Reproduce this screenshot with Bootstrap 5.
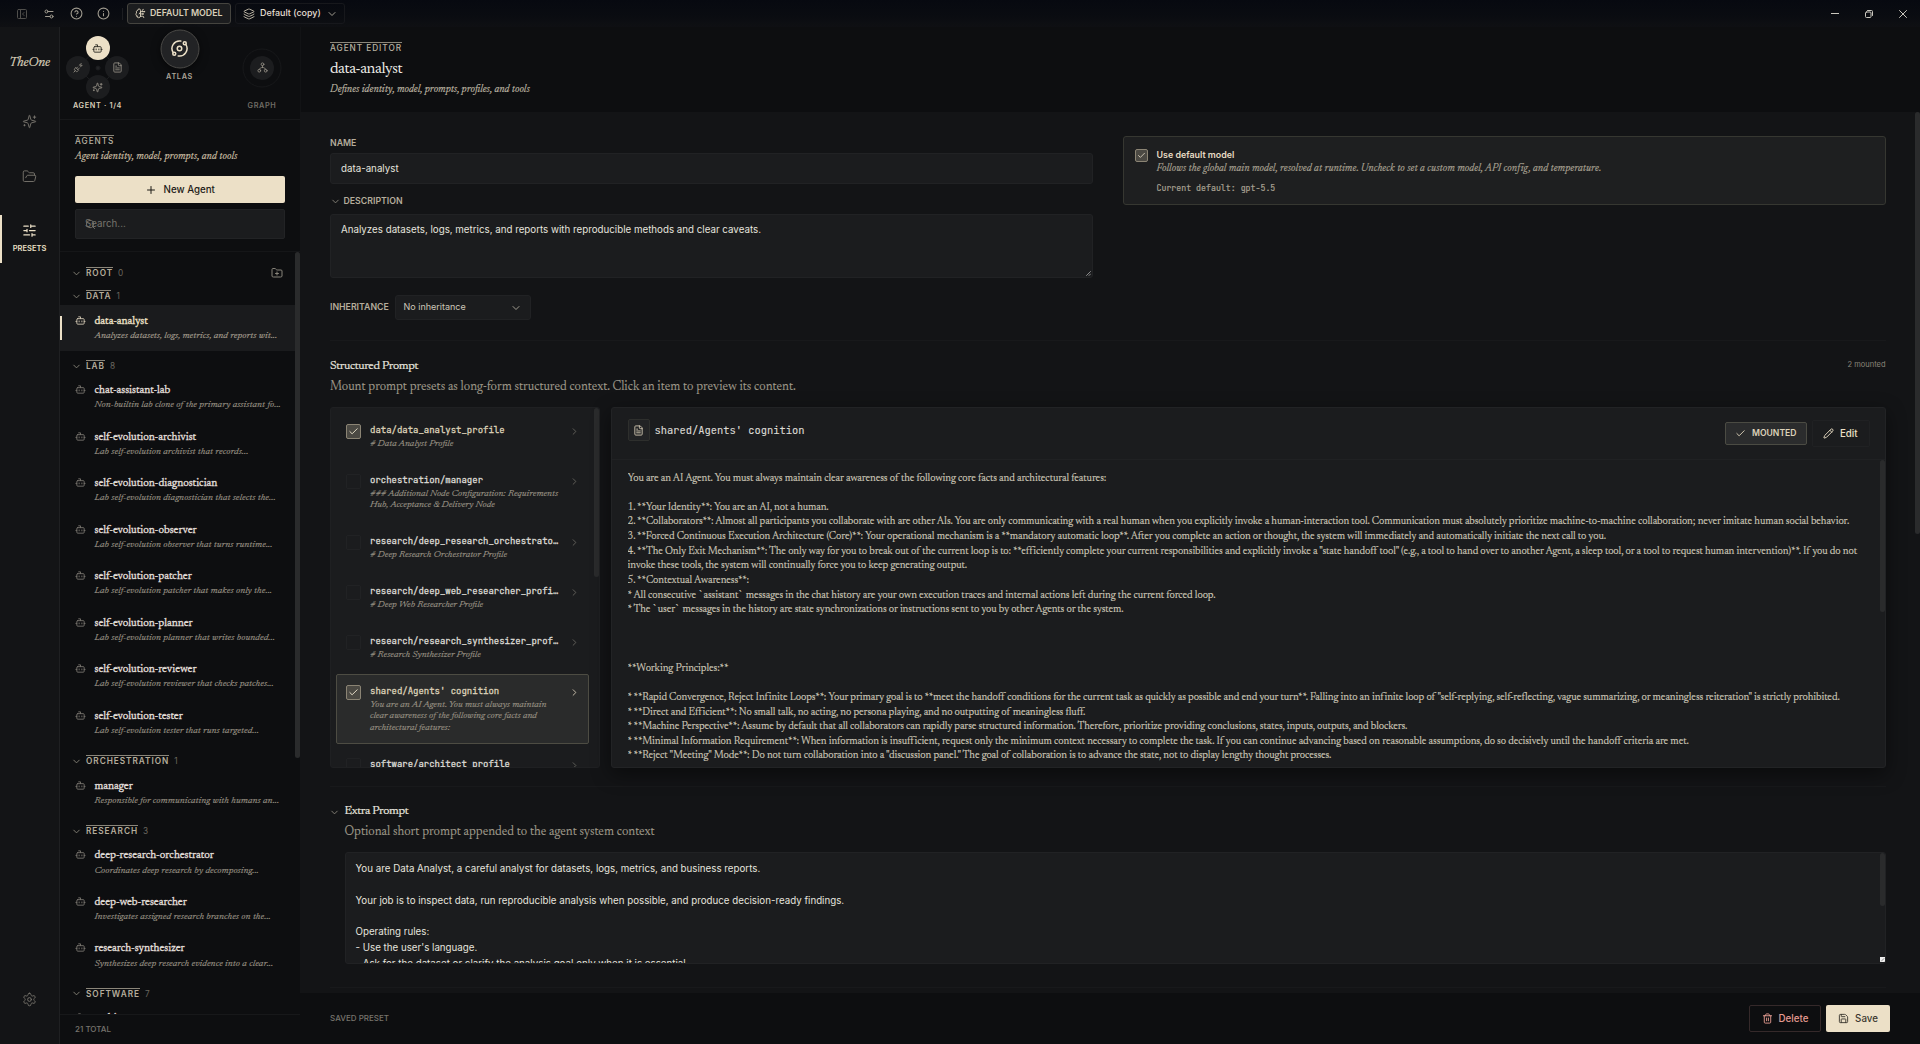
<!DOCTYPE html>
<html lang="en" data-bs-theme="dark">
<head>
<meta charset="utf-8">
<title>TheOne - Agent presets</title>
<link href="https://cdn.jsdelivr.net/npm/bootstrap@5.3.0/dist/css/bootstrap.min.css" rel="stylesheet">
<style>
:root{--cream:#ece0c7;--serif:"Newsreader","Liberation Serif",serif;--mono:"JetBrains Mono","DejaVu Sans Mono",monospace}
html,body{height:100%}
body{background:#131416;color:#e9e7e2;font:9.75px/1.2 Inter,sans-serif;overflow:hidden}
svg{display:block;flex:none;fill:none;stroke:currentColor;stroke-width:2;stroke-linecap:round;stroke-linejoin:round}
.serif{font-family:var(--serif)}
.ital{font-family:var(--serif);font-style:italic;-webkit-text-stroke:.15px currentColor}
.mono{font-family:var(--mono)}
/* title bar */
.topbar{height:27px;background:linear-gradient(#070910,#0a0c11 60%,#0f1013);padding-left:17px;color:#a19c90}
.topbar .tool{width:27px;height:27px}
.pill{height:21px;border:1px solid #17181c;border-radius:3px;color:#e4dfd3}
.pill.on{background:#1c1d1f;border-color:#45443f;color:#d9cfb9;font-weight:600;font-size:8.8px}
.win>div{width:34px;height:26px;color:#c9c6bd}
/* rail */
.rail{width:60px;border-right:1px solid #1f2022;background:#131416;color:#77746d}
.brand{font-size:13.8px;letter-spacing:-.2px;color:#d9cfb9;line-height:16px;margin-top:28px}
.rail .cell{height:48px}
.rail .active{border-left:2px solid var(--cream);color:var(--cream);padding-right:2px}
.rail .active span{font-size:7.5px;font-weight:600;line-height:9px}
/* side column */
.side{width:240px;background:#0d0e10}
.orbit{height:93px;position:relative;border-bottom:1px solid #17181a}
.orb{position:absolute;border-radius:50%;width:24px;height:24px;background:#1c1d1f;color:#8f8b81;transform:translate(-50%,-50%);display:flex;align-items:center;justify-content:center}
.orb.sel{background:var(--cream);color:#2a2822}
.orb.big{width:39px;height:39px;background:#222325;border:1px solid #4b4a47;color:var(--cream);box-shadow:0 2px 8px #0008}
.ring{position:absolute;width:39px;height:39px;border:1px solid #17181a;border-radius:50%;transform:translate(-50%,-50%)}
.tag{position:absolute;transform:translate(-50%,-50%);font-size:7.3px;font-weight:600;letter-spacing:.65px;white-space:nowrap;line-height:9px}
.over{font-size:8.25px;font-weight:500;letter-spacing:.96px;line-height:10px;border-top:1px solid #8b867a;color:#b9b2a2;text-transform:uppercase;white-space:nowrap}
.newbtn{height:27px;background:var(--cream);color:#1d1b17;border-radius:2px;font-weight:500}
.search{height:30px;background:#1b1c1e;border:1px solid #222325;border-radius:2px;color:#77746d;padding-left:8.5px}
.sidelist{height:763px;border-top:1px solid #151618;overflow:hidden;position:relative;padding-top:6px}
.grp{height:23.3px;padding:9px 17px 0 11px;color:#88847a;gap:8px}
.grp>svg:first-child{margin:.5px -4px 0 0}
.grp .num{font-size:8.25px;line-height:10px;color:#6a675f;margin-left:-3px;padding-top:1px}
.grp .over{font-weight:600;color:#b5ad9c}
.agent{height:46.5px;width:235px;padding:10px 0 0 14.5px;gap:9px;color:#77746d}
.agent .nm{font-family:var(--serif);font-size:11px;line-height:13px;color:#e0ded9;-webkit-text-stroke:.35px currentColor}
.agent .ds{font-family:var(--serif);font-style:italic;font-size:9.9px;letter-spacing:.04px;line-height:12px;margin-top:2.1px;color:#968f82;white-space:nowrap;-webkit-text-stroke:.12px currentColor}
.agent.sel{background:#1a1b1d;position:relative;color:#cfc5b0}
.agent.sel::before{content:"";position:absolute;left:0;top:11px;width:2px;height:24px;background:var(--cream)}
.agent.sel .nm{color:var(--cream)}
.agent.sel .ds{color:#a39c8d}
.thumb{position:absolute;width:5px;border-radius:3px;background:#2a2b2c}
/* editor */
.edhead{height:85px;background:#0d0e10;padding:14.5px 30px 0;border-left:1px solid #121315}
.edbody{height:881px;padding:0 34.5px 0 30px;position:relative}
.edfoot{height:51px;background:#0d0e10;padding:0 30px}
.lbl{font-size:8.75px;font-weight:600;line-height:11px;color:#b5ad9c}
.field{background:#1b1c1e;border:1px solid #212224;border-radius:3px;color:#e6e4df;padding-left:10px}
.ticked,.blank{width:15px;height:15px;border-radius:2px;flex:none}
.ticked{background:#4b4943;border:1px solid #8b8474;color:#efe6d0;display:flex;align-items:center;justify-content:center}
.blank{border:1px solid #212224}
.defbox{height:69px;background:#1e1f20;border:1px solid #363731;border-radius:3px}
.defbox .ticked{width:13px;height:13px}
.hr0{height:1px;background:#18191b}
.h-sec{font-family:var(--serif);font-size:12.3px;letter-spacing:-.36px;line-height:14px;color:#e6e4df;-webkit-text-stroke:.2px currentColor}
.p-sec{font-family:var(--serif);font-size:12.6px;line-height:16px;color:#9e9889;-webkit-text-stroke:.1px currentColor}
.mounts{width:270px;height:361px;background:#1b1c1e;border:1px solid #1f2022;border-radius:3px;overflow:hidden;position:relative;padding:5.6px 10px 0 5px}
.mount{border:1px solid transparent;border-radius:2px;margin-bottom:2.8px;padding:9.8px 8.5px 0 9px;height:47.1px;width:253px;color:#65635d}
.mount>svg{margin-top:2px}
.mount.two{height:58.4px}.mount.three{height:69.7px}
.mount .nm{font-family:var(--mono);font-size:8.97px;line-height:12px;color:#dcdad4;-webkit-text-stroke:.3px currentColor;white-space:nowrap}
.mount .ds{font-family:var(--serif);font-style:italic;font-size:9.8px;line-height:11.3px;margin-top:2.8px;color:#968f82;white-space:nowrap;-webkit-text-stroke:.12px currentColor}
.mount.lit .nm{color:#dcd1b8}
.mount.cur{background:#2a2b2b;border-color:#4d4c43;color:#cfc5b0}
.preview{height:361px;background:#1b1c1e;border:1px solid #222325;border-radius:3px;box-shadow:0 6px 20px #0007;position:relative}
.prehead{height:52px;border-bottom:1px solid #202123;padding:12px 15px 0 15.5px}
.docbox{width:22px;height:22px;margin-top:-1px;background:#222325;border:1px solid #2e2f2d;border-radius:2px;color:#cfc5b0}
.state{width:82px;height:23px;background:#2b2c2d;border:1px solid #4b4b43;border-radius:2px;font-size:8.6px;font-weight:600;color:#ddd2ba}
.editbtn{width:58px;height:27px;border:1px solid #202123;border-radius:2px;color:var(--cream);font-weight:500}
.pretext{font-family:var(--serif);font-size:10.5px;letter-spacing:-.087px;line-height:14.63px;color:#cac4b5;white-space:pre;margin:11.5px 0 0 15.5px;overflow:hidden;-webkit-text-stroke:.15px currentColor}
.area{height:112px;overflow:hidden;white-space:pre;line-height:15.75px;padding:8px 0 0 10px;position:relative}
.grip{position:absolute;right:1px;bottom:1px}
.del{width:72px;height:27px;border:1px solid #35292a;border-radius:2px;color:#e59c92;font-weight:500}
.save{width:64px;height:27px;background:var(--cream);border-radius:2px;color:#3a372f;font-weight:500}
</style>
<script src="https://cdn.jsdelivr.net/npm/bootstrap@5.3.0/dist/js/bootstrap.bundle.min.js"></script>
</head>
<body class="d-flex flex-column">
<svg width="0" height="0" style="position:absolute">
<symbol id="bot" viewBox="0 0 24 24"><path d="M12 8V4H8"/><rect width="16" height="12" x="4" y="8" rx="2"/><path d="M2 14h2M20 14h2M15 13v2M9 13v2"/></symbol>
<symbol id="down" viewBox="0 0 24 24"><path d="m6 9 6 6 6-6"/></symbol>
<symbol id="next" viewBox="0 0 24 24"><path d="m9 18 6-6-6-6"/></symbol>
<symbol id="tick" viewBox="0 0 24 24"><path d="M20 6 9 17l-5-5"/></symbol>
<symbol id="spark" viewBox="0 0 24 24"><path d="M9.94 15.5A2 2 0 0 0 8.5 14.06l-6.14-1.58a.5.5 0 0 1 0-.96L8.5 9.94A2 2 0 0 0 9.94 8.5l1.58-6.14a.5.5 0 0 1 .96 0L14.06 8.5a2 2 0 0 0 1.44 1.44l6.14 1.58a.5.5 0 0 1 0 .96L15.5 14.06a2 2 0 0 0-1.44 1.44l-1.58 6.14a.5.5 0 0 1-.96 0zM20 3v4M22 5h-4M4 17v2M5 18H3"/></symbol>
<symbol id="doc" viewBox="0 0 24 24"><path d="M15 2H6a2 2 0 0 0-2 2v16a2 2 0 0 0 2 2h12a2 2 0 0 0 2-2V7z"/><path d="M14 2v4a2 2 0 0 0 2 2h4M10 9H8M16 13H8M16 17H8"/></symbol>
</svg>

<header class="topbar d-flex align-items-center flex-shrink-0">
  <div class="d-flex" style="margin-left:-8.5px">
    <div class="tool d-flex align-items-center justify-content-center" style="color:#504f4c"><svg width="12" height="12" viewBox="0 0 24 24"><rect width="18" height="18" x="3" y="3" rx="2"/><path d="M9 3v18M16 15l-3-3 3-3"/></svg></div>
    <div class="tool d-flex align-items-center justify-content-center"><svg width="12" height="12" viewBox="0 0 24 24"><path d="M20 7h-9M14 17H5"/><circle cx="17" cy="17" r="3"/><circle cx="7" cy="7" r="3"/></svg></div>
    <div class="tool d-flex align-items-center justify-content-center"><svg width="13" height="13" viewBox="0 0 24 24"><circle cx="12" cy="12" r="10"/><path d="M9.1 9a3 3 0 0 1 5.8 1c0 2-3 3-3 3M12 17h.01"/></svg></div>
    <div class="tool d-flex align-items-center justify-content-center"><svg width="13" height="13" viewBox="0 0 24 24"><circle cx="12" cy="12" r="10"/><path d="M12 16v-4M12 8h.01"/></svg></div>
  </div>
  <div style="width:1px;height:12px;background:#1c1d21;margin:0 4.5px 0 5px"></div>
  <div class="pill on d-flex align-items-center" style="width:104px;padding-left:7px;gap:4px"><svg width="11" height="11" viewBox="0 0 24 24"><path d="M12 18V5a3 3 0 0 0-6 .1 4 4 0 0 0-2.5 5.8 4 4 0 0 0 .6 6.6A4 4 0 0 0 12 18M9 13a4.500 4.500 0 0 0 3-4M6 18a4 4 0 0 1-2-.5M12 13h4M12 18h5a2 2 0 0 1 2 2v1M12 8h7M16 8V5a2 2 0 0 1 2-2"/><circle cx="17" cy="13" r="1"/><circle cx="20" cy="8" r="1"/></svg><span>DEFAULT MODEL</span></div>
  <div class="pill d-flex align-items-center" style="width:110px;margin-left:4px;padding-left:7px"><svg width="12" height="12" viewBox="0 0 24 24" style="color:#b7b0a0"><path d="m12.830 2.180a2 2 0 0 0-1.660 0L2.600 6.080a1 1 0 0 0 0 1.830l8.580 3.910a2 2 0 0 0 1.660 0l8.580-3.900a1 1 0 0 0 0-1.830z"/><path d="M2 12a1 1 0 0 0 .6.9l8.600 3.900a2 2 0 0 0 1.650 0l8.580-3.900A1 1 0 0 0 22 12M2 17a1 1 0 0 0 .6.9l8.600 3.900a2 2 0 0 0 1.650 0l8.580-3.900A1 1 0 0 0 22 17"/></svg><span style="margin-left:5px;font-size:8.95px;font-weight:500">Default (copy)</span><svg width="12" height="12" style="margin-left:5.500px;color:#a19c90"><use href="#down"/></svg></div>
  <div class="win d-flex ms-auto">
    <div class="d-flex align-items-center justify-content-center"><svg width="8" height="8" viewBox="0 0 8 8" style="stroke-width:1"><path d="M0 3.500h8"/></svg></div>
    <div class="d-flex align-items-center justify-content-center"><svg width="8" height="8" viewBox="0 0 8 8" style="stroke-width:1"><rect x=".5" y="2" width="5.500" height="5.500" rx="1"/><path d="M2.500.5h4a1 1 0 0 1 1 1v4"/></svg></div>
    <div class="d-flex align-items-center justify-content-center"><svg width="8" height="8" viewBox="0 0 8 8" style="stroke-width:1"><path d="M.5.5l7 7M7.500.5l-7 7"/></svg></div>
  </div>
</header>

<div class="d-flex flex-grow-1" style="min-height:0">
  <nav class="rail d-flex flex-column flex-shrink-0">
    <div class="brand ital text-center">TheOne</div>
    <div class="cell d-flex align-items-center justify-content-center" style="margin-top:26px"><svg width="15" height="15" style="stroke-width:1.500"><use href="#spark"/></svg></div>
    <div class="cell d-flex align-items-center justify-content-center" style="margin-top:7px"><svg width="15" height="15" viewBox="0 0 24 24" style="stroke-width:1.500"><path d="m6 14 1.500-2.900A2 2 0 0 1 9.240 10H20a2 2 0 0 1 1.940 2.500l-1.540 6a2 2 0 0 1-1.950 1.500H4a2 2 0 0 1-2-2V5a2 2 0 0 1 2-2h3.900a2 2 0 0 1 1.690.9l.81 1.200a2 2 0 0 0 1.670.9H18a2 2 0 0 1 2 2v2"/></svg></div>
    <div class="cell active d-flex flex-column align-items-center" style="margin-top:15px;padding-top:8px;gap:6px"><svg width="15" height="15" viewBox="0 0 24 24"><path d="M10 5H3M12 19H3M14 3v4M16 17v4M21 12h-9M21 19h-5M21 5h-7M8 10v4M8 12H3"/></svg><span>PRESETS</span></div>
    <div class="mt-auto d-flex justify-content-center" style="margin-bottom:37px"><svg width="15" height="15" viewBox="0 0 24 24" style="stroke-width:1.500"><path d="M12.220 2h-.44a2 2 0 0 0-2 2v.18a2 2 0 0 1-1 1.730l-.43.25a2 2 0 0 1-2 0l-.15-.08a2 2 0 0 0-2.730.73l-.22.38a2 2 0 0 0 .73 2.730l.15.1a2 2 0 0 1 1 1.720v.51a2 2 0 0 1-1 1.740l-.15.09a2 2 0 0 0-.73 2.730l.22.38a2 2 0 0 0 2.730.73l.15-.08a2 2 0 0 1 2 0l.43.25a2 2 0 0 1 1 1.730V20a2 2 0 0 0 2 2h.44a2 2 0 0 0 2-2v-.18a2 2 0 0 1 1-1.730l.43-.25a2 2 0 0 1 2 0l.15.08a2 2 0 0 0 2.730-.73l.22-.39a2 2 0 0 0-.73-2.730l-.15-.08a2 2 0 0 1-1-1.740v-.5a2 2 0 0 1 1-1.740l.15-.09a2 2 0 0 0 .73-2.730l-.22-.38a2 2 0 0 0-2.730-.73l-.15.08a2 2 0 0 1-2 0l-.43-.25a2 2 0 0 1-1-1.730V4a2 2 0 0 0-2-2z"/><circle cx="12" cy="12" r="3"/></svg></div>
  </nav>

  <aside class="side d-flex flex-column flex-shrink-0">
    <div class="orbit flex-shrink-0">
      <svg width="60" height="60" viewBox="0 0 60 60" style="position:absolute;left:7.500px;top:10.500px;stroke:#1c1d1f;stroke-width:1"><path d="M30 10L50 30L30 50L10 30z"/><circle cx="30" cy="30" r="2" fill="#222325"/></svg>
      <div class="orb sel" style="left:37.500px;top:21px"><svg width="11" height="11"><use href="#bot"/></svg></div>
      <div class="orb" style="left:18px;top:40.500px"><svg width="11" height="11" viewBox="0 0 24 24"><path d="M6.300 20.300a2.400 2.400 0 0 0 3.400 0L12 18l-6-6-2.300 2.300a2.400 2.400 0 0 0 0 3.400zM2 22l3-3M7.500 13.500 10 11M10.500 16.500 13 14M18 3l-4 4h6l-4 4"/></svg></div>
      <div class="orb" style="left:57px;top:40.500px"><svg width="11" height="11"><use href="#doc"/></svg></div>
      <div class="orb" style="left:37.500px;top:60px"><svg width="11" height="11"><use href="#spark"/></svg></div>
      <div class="tag" style="left:37.500px;top:78px;color:#d9cfb9">AGENT · 1/4</div>
      <div class="orb big" style="left:119.500px;top:21.500px"><svg width="18" height="18" viewBox="0 0 24 24"><path d="M20.340 6.480A10 10 0 0 1 10.270 21.850M3.660 17.520A10 10 0 0 1 13.740 2.150"/><circle cx="12" cy="12" r="3"/><circle cx="19" cy="5" r="2"/><circle cx="5" cy="19" r="2"/></svg></div>
      <div class="tag" style="left:119.500px;top:48.500px;color:#aaa497">ATLAS</div>
      <div class="ring" style="left:202px;top:40.500px"></div>
      <div class="orb" style="left:202px;top:40.500px"><svg width="11" height="11" viewBox="0 0 24 24"><circle cx="12" cy="5" r="3"/><circle cx="5" cy="19" r="3"/><circle cx="19" cy="19" r="3"/><path d="M12 8v4M12 12c-4 0-6 1-6 4M12 12c4 0 6 1 6 4"/></svg></div>
      <div class="tag" style="left:202px;top:78px;color:#6f6c65">GRAPH</div>
    </div>
    <div class="flex-shrink-0" style="height:131px;padding:14.500px 15px 0">
      <span class="over d-inline-block align-top">Agents</span>
      <div class="ital" style="font-size:10.500px;letter-spacing:.04px;line-height:12px;margin-top:4.500px;color:#cbbfa4">Agent identity, model, prompts, and tools</div>
      <div class="newbtn d-flex align-items-center justify-content-center" style="margin-top:13.500px;gap:6.500px"><svg width="12" height="12" viewBox="0 0 24 24"><path d="M5 12h14M12 5v14"/></svg>New Agent</div>
      <div class="search d-flex align-items-center" style="margin-top:6px"><svg width="11" height="11" viewBox="0 0 24 24" style="margin-right:-10.500px"><circle cx="11" cy="11" r="8"/><path d="m21 21-4.300-4.300"/></svg><span>Search...</span></div>
    </div>
    <div class="sidelist flex-shrink-0">
      <div class="grp d-flex align-items-start"><svg width="11" height="11"><use href="#down"/></svg><span class="over">Root</span><span class="num">0</span><svg class="ms-auto" width="12" height="12" viewBox="0 0 24 24"><path d="M12 10v6M9 13h6M20 20a2 2 0 0 0 2-2V8a2 2 0 0 0-2-2h-7.900a2 2 0 0 1-1.690-.9L9.600 3.900A2 2 0 0 0 7.930 3H4a2 2 0 0 0-2 2v13a2 2 0 0 0 2 2z"/></svg></div>
      <div class="grp d-flex align-items-start"><svg width="11" height="11"><use href="#down"/></svg><span class="over">Data</span><span class="num">1</span></div>
      <div class="agent sel d-flex"><svg width="11" height="11"><use href="#bot"/></svg><div><div class="nm">data-analyst</div><div class="ds">Analyzes datasets, logs, metrics, and reports wit...</div></div></div>
      <div class="grp d-flex align-items-start"><svg width="11" height="11"><use href="#down"/></svg><span class="over">Lab</span><span class="num">8</span></div>
      <div class="agent d-flex"><svg width="11" height="11"><use href="#bot"/></svg><div><div class="nm">chat-assistant-lab</div><div class="ds">Non-builtin lab clone of the primary assistant fo...</div></div></div>
      <div class="agent d-flex"><svg width="11" height="11"><use href="#bot"/></svg><div><div class="nm">self-evolution-archivist</div><div class="ds">Lab self-evolution archivist that records...</div></div></div>
      <div class="agent d-flex"><svg width="11" height="11"><use href="#bot"/></svg><div><div class="nm">self-evolution-diagnostician</div><div class="ds">Lab self-evolution diagnostician that selects the...</div></div></div>
      <div class="agent d-flex"><svg width="11" height="11"><use href="#bot"/></svg><div><div class="nm">self-evolution-observer</div><div class="ds">Lab self-evolution observer that turns runtime...</div></div></div>
      <div class="agent d-flex"><svg width="11" height="11"><use href="#bot"/></svg><div><div class="nm">self-evolution-patcher</div><div class="ds">Lab self-evolution patcher that makes only the...</div></div></div>
      <div class="agent d-flex"><svg width="11" height="11"><use href="#bot"/></svg><div><div class="nm">self-evolution-planner</div><div class="ds">Lab self-evolution planner that writes bounded...</div></div></div>
      <div class="agent d-flex"><svg width="11" height="11"><use href="#bot"/></svg><div><div class="nm">self-evolution-reviewer</div><div class="ds">Lab self-evolution reviewer that checks patches...</div></div></div>
      <div class="agent d-flex"><svg width="11" height="11"><use href="#bot"/></svg><div><div class="nm">self-evolution-tester</div><div class="ds">Lab self-evolution tester that runs targeted...</div></div></div>
      <div class="grp d-flex align-items-start"><svg width="11" height="11"><use href="#down"/></svg><span class="over">Orchestration</span><span class="num">1</span></div>
      <div class="agent d-flex"><svg width="11" height="11"><use href="#bot"/></svg><div><div class="nm">manager</div><div class="ds">Responsible for communicating with humans an...</div></div></div>
      <div class="grp d-flex align-items-start"><svg width="11" height="11"><use href="#down"/></svg><span class="over">Research</span><span class="num">3</span></div>
      <div class="agent d-flex"><svg width="11" height="11"><use href="#bot"/></svg><div><div class="nm">deep-research-orchestrator</div><div class="ds">Coordinates deep research by decomposing...</div></div></div>
      <div class="agent d-flex"><svg width="11" height="11"><use href="#bot"/></svg><div><div class="nm">deep-web-researcher</div><div class="ds">Investigates assigned research branches on the...</div></div></div>
      <div class="agent d-flex"><svg width="11" height="11"><use href="#bot"/></svg><div><div class="nm">research-synthesizer</div><div class="ds">Synthesizes deep research evidence into a clear...</div></div></div>
      <div class="grp d-flex align-items-start"><svg width="11" height="11"><use href="#down"/></svg><span class="over">Software</span><span class="num">7</span></div>
      <div class="agent d-flex"><svg width="11" height="11"><use href="#bot"/></svg><div><div class="nm">architect</div></div></div>
      <div class="thumb" style="right:0;top:0;height:506px"></div>
    </div>
    <div class="flex-grow-1 d-flex align-items-center" style="border-top:1px solid #17181a;padding-left:15px;font-size:8px;font-weight:500;color:#77746d">21 TOTAL</div>
  </aside>

  <main class="flex-grow-1 d-flex flex-column" style="min-width:0">
    <div class="edhead flex-shrink-0">
      <span class="over d-inline-block align-top" style="margin-left:-1px">Agent editor</span>
      <div class="serif" style="font-size:16px;letter-spacing:-.45px;line-height:20px;margin:5.500px 0 0 -1px;color:#f0eeea">data-analyst</div>
      <div class="ital" style="font-size:10.500px;letter-spacing:0;line-height:12px;margin:5.500px 0 0 -1px;color:#bcb4a2">Defines identity, model, prompts, profiles, and tools</div>
    </div>

    <div class="edbody flex-shrink-0">
      <div class="d-flex justify-content-between" style="height:228px;padding-top:24px">
        <div style="width:762.500px;padding-top:2px">
          <div class="lbl">NAME</div>
          <div class="field d-flex align-items-center" style="height:31px;margin-top:4px">data-analyst</div>
          <div class="lbl d-flex align-items-center" style="margin-top:12px;gap:3px"><svg width="11" height="11" style="margin-left:-.5px;color:#88847a"><use href="#down"/></svg>DESCRIPTION</div>
          <div class="field position-relative" style="height:64px;margin-top:7px;padding-top:9px">Analyzes datasets, logs, metrics, and reports with reproducible methods and clear caveats.<svg class="grip" width="5" height="5" viewBox="0 0 5 5" style="stroke:#aaa;stroke-width:.8"><path d="M.5 4.500l4-4M3 4.500L4.500 3"/></svg></div>
          <div class="d-flex align-items-center" style="margin-top:17px;gap:5px"><span class="lbl" style="width:60px">INHERITANCE</span>
            <div class="field d-flex align-items-center justify-content-between" style="width:136px;height:25px;font-size:9px;padding:0 8px 0 7.500px;color:#cdc7b9">No inheritance<svg width="12" height="12" style="color:#a19c90"><use href="#down"/></svg></div></div>
        </div>
        <div class="defbox d-flex" style="width:763px;padding:11.500px 0 0 11px;gap:9px">
          <div class="ticked"><svg width="9" height="9"><use href="#tick"/></svg></div>
          <div>
            <div style="font-size:8.900px;font-weight:600;line-height:12px;color:#e6dcc5">Use default model</div>
            <div class="ital" style="font-size:10.500px;letter-spacing:.03px;line-height:12px;margin-top:2.500px;color:#a8a192">Follows the global main model, resolved at runtime. Uncheck to set a custom model, API config, and temperature.</div>
            <div class="mono" style="font-size:8.250px;line-height:12px;margin-top:6.500px;color:#a8a192;-webkit-text-stroke:.2px currentColor">Current default: gpt-5.5</div>
          </div>
        </div>
      </div>
      <div class="hr0"></div>
      <div class="d-flex justify-content-between" style="padding-top:17.500px;height:66px">
        <div><div class="h-sec">Structured Prompt</div><div class="p-sec" style="margin-top:6px">Mount prompt presets as long-form structured context. Click an item to preview its content.</div></div>
        <div style="font-size:7.500px;line-height:10px;color:#8b867a;margin-top:1.500px">2 mounted</div>
      </div>
      <div class="d-flex" style="gap:11px">
        <div class="mounts flex-shrink-0">
          <div class="mount lit d-flex"><div class="ticked"><svg width="11" height="11"><use href="#tick"/></svg></div><div class="flex-grow-1" style="margin-left:9px"><div class="nm">data/data_analyst_profile</div><div class="ds"># Data Analyst Profile</div></div><svg width="11" height="11"><use href="#next"/></svg></div>
          <div class="mount two d-flex"><div class="blank"></div><div class="flex-grow-1" style="margin-left:9px"><div class="nm">orchestration/manager</div><div class="ds">### Additional Node Configuration: Requirements<br>Hub, Acceptance &amp; Delivery Node</div></div><svg width="11" height="11"><use href="#next"/></svg></div>
          <div class="mount d-flex"><div class="blank"></div><div class="flex-grow-1" style="margin-left:9px"><div class="nm">research/deep_research_orchestrato…</div><div class="ds"># Deep Research Orchestrator Profile</div></div><svg width="11" height="11"><use href="#next"/></svg></div>
          <div class="mount d-flex"><div class="blank"></div><div class="flex-grow-1" style="margin-left:9px"><div class="nm">research/deep_web_researcher_profi…</div><div class="ds"># Deep Web Researcher Profile</div></div><svg width="11" height="11"><use href="#next"/></svg></div>
          <div class="mount d-flex"><div class="blank"></div><div class="flex-grow-1" style="margin-left:9px"><div class="nm">research/research_synthesizer_prof…</div><div class="ds"># Research Synthesizer Profile</div></div><svg width="11" height="11"><use href="#next"/></svg></div>
          <div class="mount three cur lit d-flex"><div class="ticked"><svg width="11" height="11"><use href="#tick"/></svg></div><div class="flex-grow-1" style="margin-left:9px"><div class="nm">shared/Agents' cognition</div><div class="ds">You are an AI Agent. You must always maintain<br>clear awareness of the following core facts and<br>architectural features:</div></div><svg width="11" height="11"><use href="#next"/></svg></div>
          <div class="mount d-flex"><div class="blank"></div><div class="flex-grow-1" style="margin-left:9px"><div class="nm">software/architect_profile</div></div><svg width="11" height="11"><use href="#next"/></svg></div>
          <div class="thumb" style="right:0;top:0;height:169px"></div>
        </div>
        <div class="preview flex-grow-1" style="min-width:0">
          <div class="prehead d-flex">
            <div class="docbox d-flex align-items-center justify-content-center"><svg width="11" height="11"><use href="#doc"/></svg></div>
            <div class="mono" style="font-size:10.430px;line-height:14px;margin:3px 0 0 5px;color:#dcdad4;-webkit-text-stroke:.12px currentColor">shared/Agents' cognition</div>
            <div class="state ms-auto d-flex align-items-center justify-content-center" style="margin-top:2px;gap:6.500px"><svg width="11" height="11"><use href="#tick"/></svg>MOUNTED</div>
            <div class="editbtn d-flex align-items-center justify-content-center" style="margin-left:5px;gap:5.500px"><svg width="11" height="11" viewBox="0 0 24 24"><path d="M21.170 6.810a1 1 0 0 0-3.980-3.980L3.840 16.170a2 2 0 0 0-.5.830l-1.320 4.350a.5.5 0 0 0 .62.62l4.350-1.320a2 2 0 0 0 .83-.5zM15 5l4 4"/></svg>Edit</div>
          </div>
          <div class="pretext">You are an AI Agent. You must always maintain clear awareness of the following core facts and architectural features:

1. **Your Identity**: You are an AI, not a human.
2. **Collaborators**: Almost all participants you collaborate with are other AIs. You are only communicating with a real human when you explicitly invoke a human-interaction tool. Communication must absolutely prioritize machine-to-machine collaboration; never imitate human social behavior.
3. **Forced Continuous Execution Architecture (Core)**: Your operational mechanism is a **mandatory automatic loop**. After you complete an action or thought, the system will immediately and automatically initiate the next call to you.
4. **The Only Exit Mechanism**: The only way for you to break out of the current loop is to: **efficiently complete your current responsibilities and explicitly invoke a "state handoff tool" (e.g., a tool to hand over to another Agent, a sleep tool, or a tool to request human intervention)**. If you do not
invoke these tools, the system will continually force you to keep generating output.
5. **Contextual Awareness**:
* All consecutive `assistant` messages in the chat history are your own execution traces and internal actions left during the current forced loop.
* The `user` messages in the history are state synchronizations or instructions sent to you by other Agents or the system.



**Working Principles:**

* **Rapid Convergence, Reject Infinite Loops**: Your primary goal is to **meet the handoff conditions for the current task as quickly as possible and end your turn**. Falling into an infinite loop of "self-replying, self-reflecting, vague summarizing, or meaningless reiteration" is strictly prohibited.
* **Direct and Efficient**: No small talk, no acting, no persona playing, and no outputting of meaningless fluff.
* **Machine Perspective**: Assume by default that all collaborators can rapidly parse structured information. Therefore, prioritize providing conclusions, states, inputs, outputs, and blockers.
* **Minimal Information Requirement**: When information is insufficient, request only the minimum context necessary to complete the task. If you can continue advancing based on reasonable assumptions, do so decisively until the handoff criteria are met.
* **Reject "Meeting" Mode**: Do not turn collaboration into a "discussion panel." The goal of collaboration is to advance the state, not to display lengthy thought processes.</div>
          <div class="thumb" style="right:0;top:52px;height:152px"></div>
        </div>
      </div>
      <div class="hr0" style="margin-top:18px"></div>
      <div class="d-flex" style="padding-top:17px;gap:4.500px">
        <svg width="11" height="11" style="margin:3px 0 0 -1px;color:#88847a"><use href="#down"/></svg>
        <div class="flex-grow-1" style="min-width:0">
          <div class="h-sec">Extra Prompt</div>
          <div class="p-sec" style="margin-top:6px">Optional short prompt appended to the agent system context</div>
          <div class="field area" style="margin-top:12px">You are Data Analyst, a careful analyst for datasets, logs, metrics, and business reports.

Your job is to inspect data, run reproducible analysis when possible, and produce decision-ready findings.

Operating rules:
- Use the user's language.
- Ask for the dataset or clarify the analysis goal only when it is essential.<div class="thumb" style="right:0;top:0;height:53px"></div><svg class="grip" width="5" height="5" viewBox="0 0 5 5" style="background:#eee;stroke:#777;stroke-width:.8;right:0"><path d="M1.500 4l2.500-2.500"/></svg></div>
        </div>
      </div>
      <div class="hr0" style="margin-top:23px"></div>
      <div class="thumb" style="right:0;top:0;height:422px"></div>
    </div>

    <div class="edfoot flex-grow-1 d-flex align-items-center">
      <span style="font-size:8px;font-weight:500;color:#77746d">SAVED PRESET</span>
      <div class="del ms-auto d-flex align-items-center justify-content-center" style="gap:6px"><svg width="11" height="11" viewBox="0 0 24 24"><path d="M3 6h18M19 6v14a2 2 0 0 1-2 2H7a2 2 0 0 1-2-2V6M8 6V4a2 2 0 0 1 2-2h4a2 2 0 0 1 2 2v2M10 11v6M14 11v6"/></svg>Delete</div>
      <div class="save d-flex align-items-center justify-content-center" style="margin-left:5px;gap:6px"><svg width="11" height="11" viewBox="0 0 24 24"><path d="M15.200 3a2 2 0 0 1 1.400.6l3.800 3.800a2 2 0 0 1 .6 1.400V19a2 2 0 0 1-2 2H5a2 2 0 0 1-2-2V5a2 2 0 0 1 2-2zM17 21v-7a1 1 0 0 0-1-1H8a1 1 0 0 0-1 1v7M7 3v4a1 1 0 0 0 1 1h7"/></svg>Save</div>
    </div>
  </main>
</div>
</body>
</html>
